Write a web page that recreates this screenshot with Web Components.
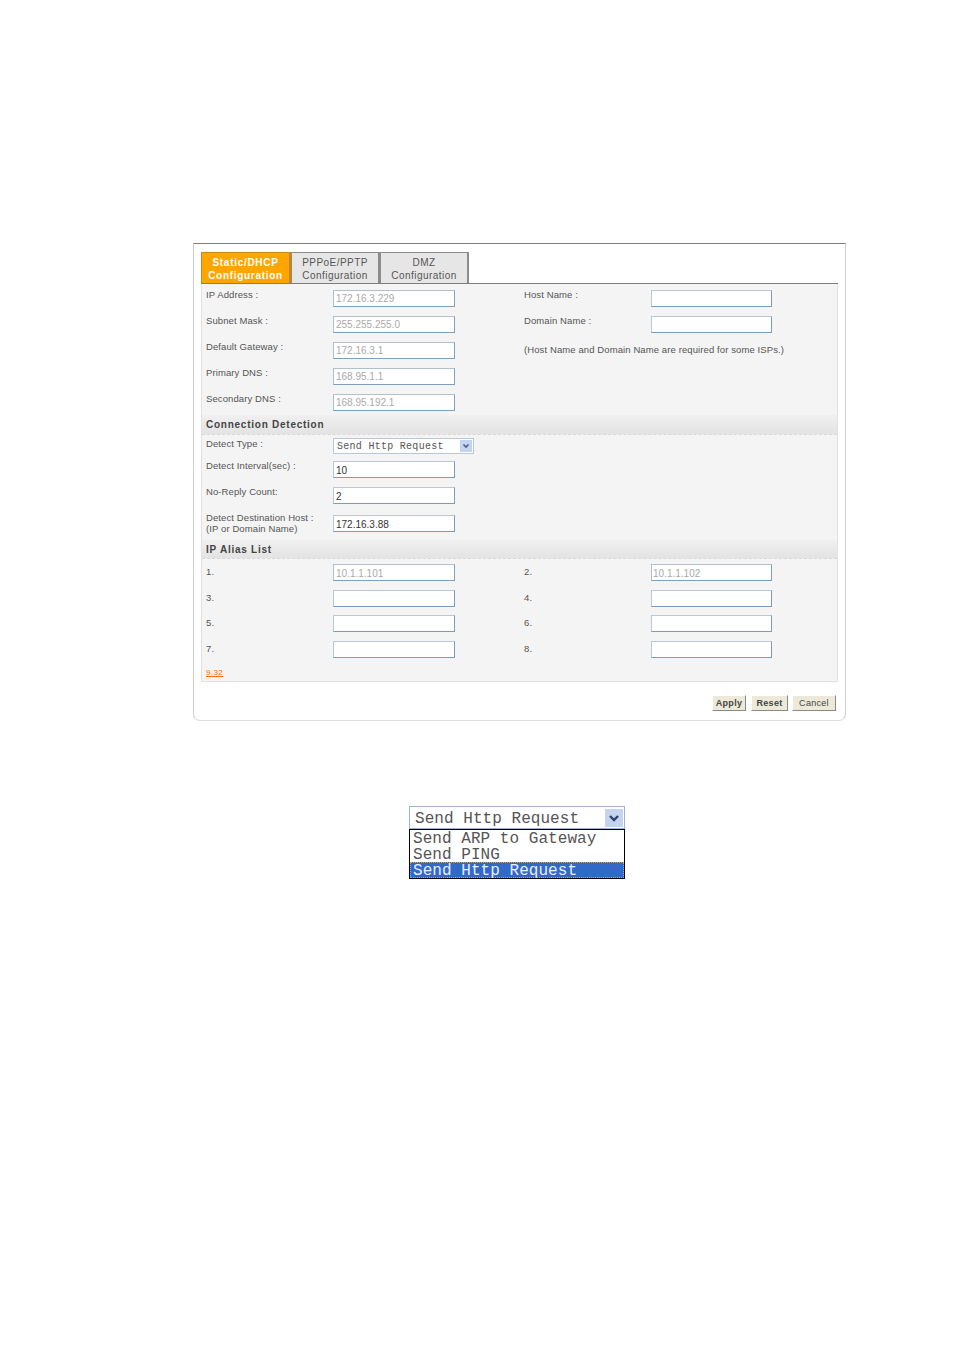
<!DOCTYPE html>
<html>
<head>
<meta charset="utf-8">
<title>WAN Configuration</title>
<style>
  html, body { margin: 0; padding: 0; background: #fff; }
  body { font-family: "Liberation Sans", Arial, sans-serif; height: 1351px; overflow: hidden; }
</style>
</head>
<body>
<wan-panel>
  <wan-tabs slot="tabs"></wan-tabs>
  <form-rows cols="2">
    <form-field label="IP Address :" value="172.16.3.229" disabled></form-field>
    <form-field label="Host Name :"></form-field>
    <form-field label="Subnet Mask :" value="255.255.255.0" disabled></form-field>
    <form-field label="Domain Name :"></form-field>
    <form-field label="Default Gateway :" value="172.16.3.1" disabled></form-field>
    <form-note>(Host Name and Domain Name are required for some ISPs.)</form-note>
    <form-field label="Primary DNS :" value="168.95.1.1" disabled></form-field>
    <span></span>
    <form-field label="Secondary DNS :" value="168.95.192.1" disabled style="--h:21px"></form-field>
    <span></span>
  </form-rows>
  <section-head style="--sh:20px">Connection Detection</section-head>
  <form-rows cols="1" style="--pad:3px;--ipt:2px">
    <form-select label="Detect Type :" value="Send Http Request"></form-select>
    <form-field label="Detect Interval(sec) :" value="10"></form-field>
    <form-field label="No-Reply Count:" value="2" style="--h:28px"></form-field>
    <form-field label="Detect Destination Host :" sub="(IP or Domain Name)" value="172.16.3.88" style="--h:25px;--ly:-3px"></form-field>
  </form-rows>
  <section-head>IP Alias List</section-head>
  <form-rows cols="2" style="--pad:5px;--ly:2px;--ipt:2px">
    <form-field label="1." value="10.1.1.101" disabled></form-field>
    <form-field label="2." value="10.1.1.102" disabled></form-field>
    <form-field label="3." style="--h:25px"></form-field>
    <form-field label="4." style="--h:25px"></form-field>
    <form-field label="5."></form-field>
    <form-field label="6."></form-field>
    <form-field label="7."></form-field>
    <form-field label="8."></form-field>
  </form-rows>
  <version-link>9.32</version-link>
  <panel-btn slot="actions" style="--w:34px;margin-right:1px" strong>Apply</panel-btn>
  <panel-btn slot="actions" style="--w:37px" strong>Reset</panel-btn>
  <panel-btn slot="actions" style="--w:44px">Cancel</panel-btn>
</wan-panel>
<select-popup></select-popup>

<script>
class WanPanel extends HTMLElement {
    constructor() {
        super();
        this.attachShadow({mode: "open"}).innerHTML = `
        <style>
            :host {
                display: block;
                box-sizing: border-box;
                width: 653px;
                height: 478px;
                margin: 243px 0 0 193px;
                padding: 8px 7px 0 7px;
                border: 1px solid #cfcfcf;
                border-top-color: #7f7f7f;
                border-bottom-color: #dddddd;
                border-radius: 0 0 7px 7px;
            }
            .body {
                box-sizing: border-box;
                height: 398px;
                background: #f4f4f4;
                border: 1px solid #e2e2e2;
                border-top: 0;
            }
            .actions {
                display: flex;
                justify-content: flex-end;
                gap: 4px;
                margin-top: 13px;
                padding-right: 2px;
            }
        </style>
        <slot name="tabs"></slot>
        <div class="body"><slot></slot></div>
        <div class="actions"><slot name="actions"></slot></div>`;
    }
}

class WanTabs extends HTMLElement {
    constructor() {
        super();
        this.attachShadow({mode: "open"}).innerHTML = `
        <style>
            :host {
                display: flex;
                height: 32px;
                box-sizing: border-box;
                border-bottom: 1px solid #7d7d7d;
                font: 10px/13px "Liberation Sans", Arial, sans-serif;
                letter-spacing: .45px;
            }
            div {
                box-sizing: border-box;
                width: 89px;
                height: 31px;
                padding-top: 3px;
                text-align: center;
                color: #555;
                background: #e6e6e6;
                border: 1px solid #8c8c8c;
                border-right-width: 2px;
                border-bottom: 0;
            }
            .on {
                width: 90px;
                color: #fff;
                font-weight: bold;
                background: #ffa500;
                border-color: #c9861a;
                letter-spacing: .7px;
            }
        </style>
        <div class="on">Static/DHCP<br>Configuration</div>
        <div>PPPoE/PPTP<br>Configuration</div>
        <div>DMZ<br>Configuration</div>`;
    }
}

class FormRows extends HTMLElement {
    constructor() {
        super();
        this.attachShadow({mode: "open"}).innerHTML = `
        <style>
            :host {
                display: grid;
                grid-template-columns: 317px 1fr;
                padding: var(--pad, 6px) 0 0 4px;
            }
            :host([cols="1"]) { grid-template-columns: 1fr; }
            :host([cols="2"]) ::slotted(:nth-child(even)) { --li: 1px; --iw: 121px; --ipl: 1px; }
        </style>
        <slot></slot>`;
    }
}

class FormField extends HTMLElement {
    constructor() {
        super();
        this.attachShadow({mode: "open"});
    }
    connectedCallback() {
        const label = this.getAttribute("label") || "";
        const sub = this.getAttribute("sub");
        const value = this.getAttribute("value") || "";
        const off = this.hasAttribute("disabled");
        this.shadowRoot.innerHTML = `
        <style>
            :host {
                display: flex;
                height: var(--h, 26px);
                font: 9.5px/11px "Liberation Sans", Arial, sans-serif;
                letter-spacing: .1px;
                color: #555;
            }
            .lbl { width: 127px; flex: none; margin: var(--ly, -1px) 0 0 var(--li, 0); }
            .in {
                box-sizing: border-box;
                width: var(--iw, 122px);
                height: 17px;
                padding: var(--ipt, 1px) 0 0 var(--ipl, 2px);
                background: #fff;
                border: 1px solid #b8c8d6;
                border-right-color: #7a9dbd;
                border-bottom-color: #7a9dbd;
                font-size: 10px;
                line-height: 14px;
                letter-spacing: 0;
                color: #333;
            }
            .off { color: #aaa; border-color: #7f9fbd; border-left-color: #b0c0cf; border-top-color: #b0c0cf; }
        </style>
        <div class="lbl">${label}${sub ? "<br>" + sub : ""}</div>
        <div class="in ${off ? "off" : ""}">${value}</div>`;
    }
}

class FormSelect extends HTMLElement {
    constructor() {
        super();
        this.attachShadow({mode: "open"});
    }
    connectedCallback() {
        this.shadowRoot.innerHTML = `
        <style>
            :host {
                display: flex;
                height: 23px;
                font: 9.5px/11px "Liberation Sans", Arial, sans-serif;
                letter-spacing: .1px;
                color: #555;
            }
            .lbl { width: 127px; flex: none; }
            .sel {
                box-sizing: border-box;
                display: flex;
                justify-content: space-between;
                width: 141px;
                height: 16px;
                padding: 1px 1px 1px 3px;
                background: #fff;
                border: 1px solid #b8c8d6;
                font: 10px/13px "Liberation Mono", monospace;
                letter-spacing: .28px;
                color: #555;
            }
            svg { display: block; }
        </style>
        <div class="lbl">${this.getAttribute("label")}</div>
        <div class="sel"><span>${this.getAttribute("value")}</span>
          <svg width="12" height="12" viewBox="0 0 12 12"><rect width="12" height="12" fill="#c3d3f0"/><path d="M3.5 4.5 6 7l2.5-2.5" fill="none" stroke="#4d6185" stroke-width="1.6"/></svg>
        </div>`;
    }
}

class FormNote extends HTMLElement {
    constructor() {
        super();
        this.attachShadow({mode: "open"}).innerHTML = `
        <style>
            :host {
                display: block;
                padding: 2px 0 0 1px;
                font: 9.5px/11px "Liberation Sans", Arial, sans-serif;
                letter-spacing: .1px;
                color: #555;
            }
        </style>
        <slot></slot>`;
    }
}

class SectionHead extends HTMLElement {
    constructor() {
        super();
        this.attachShadow({mode: "open"}).innerHTML = `
        <style>
            :host {
                display: block;
                box-sizing: border-box;
                height: var(--sh, 19px);
                padding: 3px 0 0 4px;
                background: linear-gradient(#f0f0f0, #e3e3e3);
                border-bottom: 1px dashed #d8d8d8;
                font: bold 10px/13px "Liberation Sans", Arial, sans-serif;
                letter-spacing: .75px;
                color: #444;
            }
        </style>
        <slot></slot>`;
    }
}

class VersionLink extends HTMLElement {
    constructor() {
        super();
        this.attachShadow({mode: "open"}).innerHTML = `
        <style>
            :host {
                display: block;
                padding: 0 0 0 4px;
                font: 8px/11px "Liberation Sans", Arial, sans-serif;
                letter-spacing: .4px;
                color: #ff6a00;
                text-decoration: underline;
            }
        </style>
        <slot></slot>`;
    }
}

class PanelBtn extends HTMLElement {
    constructor() {
        super();
        this.attachShadow({mode: "open"}).innerHTML = `
        <style>
            :host {
                display: block;
                box-sizing: border-box;
                width: var(--w);
                height: 16px;
                background: #ece9d8;
                border: 1px solid #fff;
                border-right-color: #8a8a80;
                border-bottom-color: #8a8a80;
                text-align: center;
                font: 9px/14px "Liberation Sans", Arial, sans-serif;
                letter-spacing: .3px;
                color: #444;
            }
            :host([strong]) { font-weight: bold; }
        </style>
        <slot></slot>`;
    }
}

class SelectPopup extends HTMLElement {
    constructor() {
        super();
        this.attachShadow({mode: "open"}).innerHTML = `
        <style>
            :host {
                display: block;
                box-sizing: border-box;
                width: 216px;
                margin: 85px 0 0 409px;
                font: 16px/16px "Liberation Mono", monospace;
                letter-spacing: .05px;
                color: #555;
            }
            .head {
                box-sizing: border-box;
                display: flex;
                justify-content: space-between;
                height: 23px;
                padding: 4px 1px 1px 5px;
                border: 1px solid #9db4cc;
                background: #fff;
            }
            .list {
                box-sizing: border-box;
                height: 50px;
                border: 1px solid #000;
                background: #fff;
            }
            .row { padding-left: 3px; height: 16px; line-height: 18px; }
            .row.sel {
                background: #3169c6;
                color: #e8eefc;
                outline: 1px dotted #d9a441;
                outline-offset: -1px;
            }
            svg { display: block; margin-top: -2px; }
        </style>
        <div class="head"><span>Send Http Request</span>
          <svg width="18" height="18" viewBox="0 0 18 18"><rect width="18" height="18" fill="#c3d3f0"/><path d="M5 7l4 4 4-4" fill="none" stroke="#2f4468" stroke-width="2.4"/></svg>
        </div>
        <div class="list">
          <div class="row">Send ARP to Gateway</div>
          <div class="row">Send PING</div>
          <div class="row sel">Send Http Request</div>
        </div>`;
    }
}

customElements.define("wan-panel", WanPanel);
customElements.define("wan-tabs", WanTabs);
customElements.define("form-rows", FormRows);
customElements.define("form-field", FormField);
customElements.define("form-select", FormSelect);
customElements.define("form-note", FormNote);
customElements.define("section-head", SectionHead);
customElements.define("version-link", VersionLink);
customElements.define("panel-btn", PanelBtn);
customElements.define("select-popup", SelectPopup);
</script>
</body>
</html>
